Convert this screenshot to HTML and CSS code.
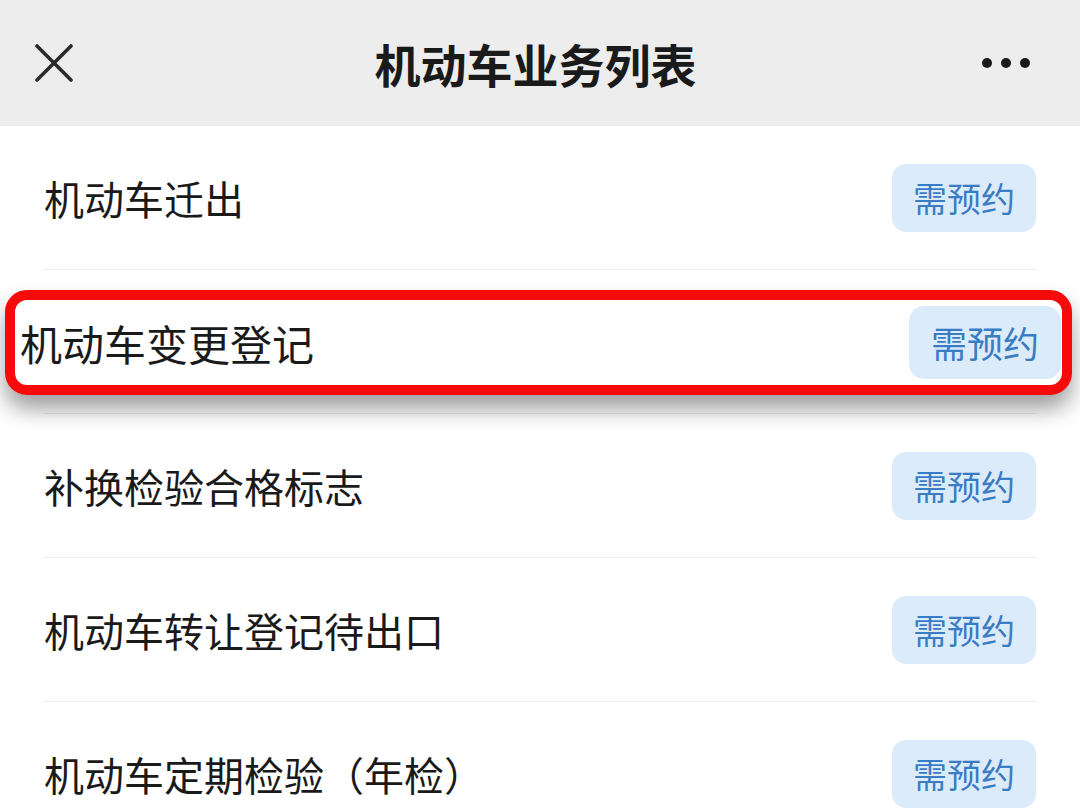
FILE: index.html
```html
<!DOCTYPE html>
<html lang="zh-CN">
  <head>
    <meta charset="UTF-8" />
    <meta name="viewport" content="width=device-width, initial-scale=1.0" />
    <title>机动车业务列表</title>
    <link rel="stylesheet" href="styles.css">
  </head>
  <body>
    <div class="topbar">
      <div class="topbar-side">
        <svg class="close-icon" viewBox="0 0 38 38" width="38" height="38">
          <path d="M2 2 L36 36 M36 2 L2 36" stroke="#2b2b2b" stroke-width="3.6" stroke-linecap="round" fill="none" />
        </svg>
      </div>
      <h1 class="title">机动车业务列表</h1>
      <div class="topbar-side right">
        <span class="dot"></span>
        <span class="dot"></span>
        <span class="dot"></span>
      </div>
    </div>

    <ul class="service-list">
      <li class="row">
        <span class="label">机动车迁出</span>
        <span class="badge">需预约</span>
      </li>
      <!-- picked row: its content is shown enlarged in the callout -->
      <li class="row picked">
        <div class="callout">
          <span class="label">机动车变更登记</span>
          <span class="badge">需预约</span>
        </div>
      </li>
      <li class="row">
        <span class="label">补换检验合格标志</span>
        <span class="badge">需预约</span>
      </li>
      <li class="row">
        <span class="label">机动车转让登记待出口</span>
        <span class="badge">需预约</span>
      </li>
      <li class="row">
        <span class="label">机动车定期检验（年检）</span>
        <span class="badge">需预约</span>
      </li>
    </ul>
  </body>
</html>
```

FILE: styles.css
```css
body {
  margin: 0;
  padding: 0;
  background-color: #ffffff;
  font-family: "Noto Sans CJK SC", "Noto Sans", sans-serif;
  color: #1a1a1a;
  overflow: hidden;
}
.topbar {
  height: 126px;
  background-color: #ededed;
  display: grid;
  grid-template-columns: 1fr auto 1fr;
  align-items: center;
  padding: 0 50px 0 35px;
}
.topbar-side {
  display: flex;
  align-items: center;
}
.topbar-side.right {
  justify-content: flex-end;
  gap: 9px;
}
.close-icon {
  display: block;
}
.dot {
  width: 10px;
  height: 10px;
  border-radius: 50%;
  background-color: #1a1a1a;
}
.title {
  margin: 0;
  padding-left: 6px;
  font-size: 46px;
  font-weight: 700;
}
.service-list {
  list-style: none;
  margin: 0;
  padding: 0 44px;
}
.row {
  position: relative;
  height: 143px;
  border-bottom: 1px solid #ececec;
  display: flex;
  align-items: center;
  justify-content: space-between;
}
.label {
  font-size: 40px;
  line-height: 1;
}
.badge {
  height: 68px;
  line-height: 68px;
  padding: 0 21px;
  border-radius: 14px;
  background-color: #dcebfa;
  color: #3a7cc4;
  font-size: 34px;
}
.callout {
  position: absolute;
  top: 20px;
  bottom: 18px;
  left: -39px;
  right: -36px;
  border: 10px solid #f70a0a;
  border-radius: 22px;
  background-color: #ffffff;
  box-shadow: 0 14px 22px rgba(0, 0, 0, 0.38);
  display: flex;
  align-items: center;
  justify-content: space-between;
  padding: 0 1px 0 5px;
}
.callout .label {
  font-size: 42px;
}
.callout .badge {
  height: 73px;
  line-height: 73px;
  padding: 0 22px;
  font-size: 36px;
  border-radius: 15px;
}
```
